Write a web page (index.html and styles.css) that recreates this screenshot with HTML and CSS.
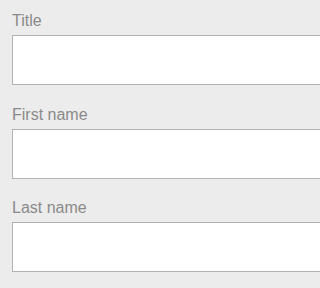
FILE: index.html
```html
<!DOCTYPE html>
<html>
<head>
<meta charset="utf-8">
<link rel="stylesheet" href="styles.css">
</head>
<body>
<form class="form">
  <div class="field">
    <label class="label">Title</label>
    <input class="input" type="text">
  </div>
  <div class="field">
    <label class="label">First name</label>
    <input class="input" type="text">
  </div>
  <div class="field">
    <label class="label">Last name</label>
    <input class="input" type="text">
  </div>
</form>
</body>
</html>
```
FILE: styles.css
```css
html, body {
  margin: 0;
  padding: 0;
  background: #ececec;
  overflow: hidden;
}
.form {
  box-sizing: border-box;
  width: 100%;
  height: 288px;
  overflow: hidden;
  display: flex;
  flex-direction: column;
  gap: 19.5px;
  padding: 11px 0 0 12px;
  font-family: "Liberation Sans", Arial, sans-serif;
}
.field {
  display: flex;
  flex-direction: column;
  gap: 5px;
}
.label {
  font-size: 16px;
  line-height: 19px;
  color: #8a8a8a;
}
.input {
  box-sizing: border-box;
  width: calc(100% + 40px);
  flex: none;
  height: 50px;
  margin: 0;
  border: 1px solid #b3b3b3;
  border-radius: 0;
  background: #ffffff;
  outline: none;
  padding: 0 10px;
}
```
